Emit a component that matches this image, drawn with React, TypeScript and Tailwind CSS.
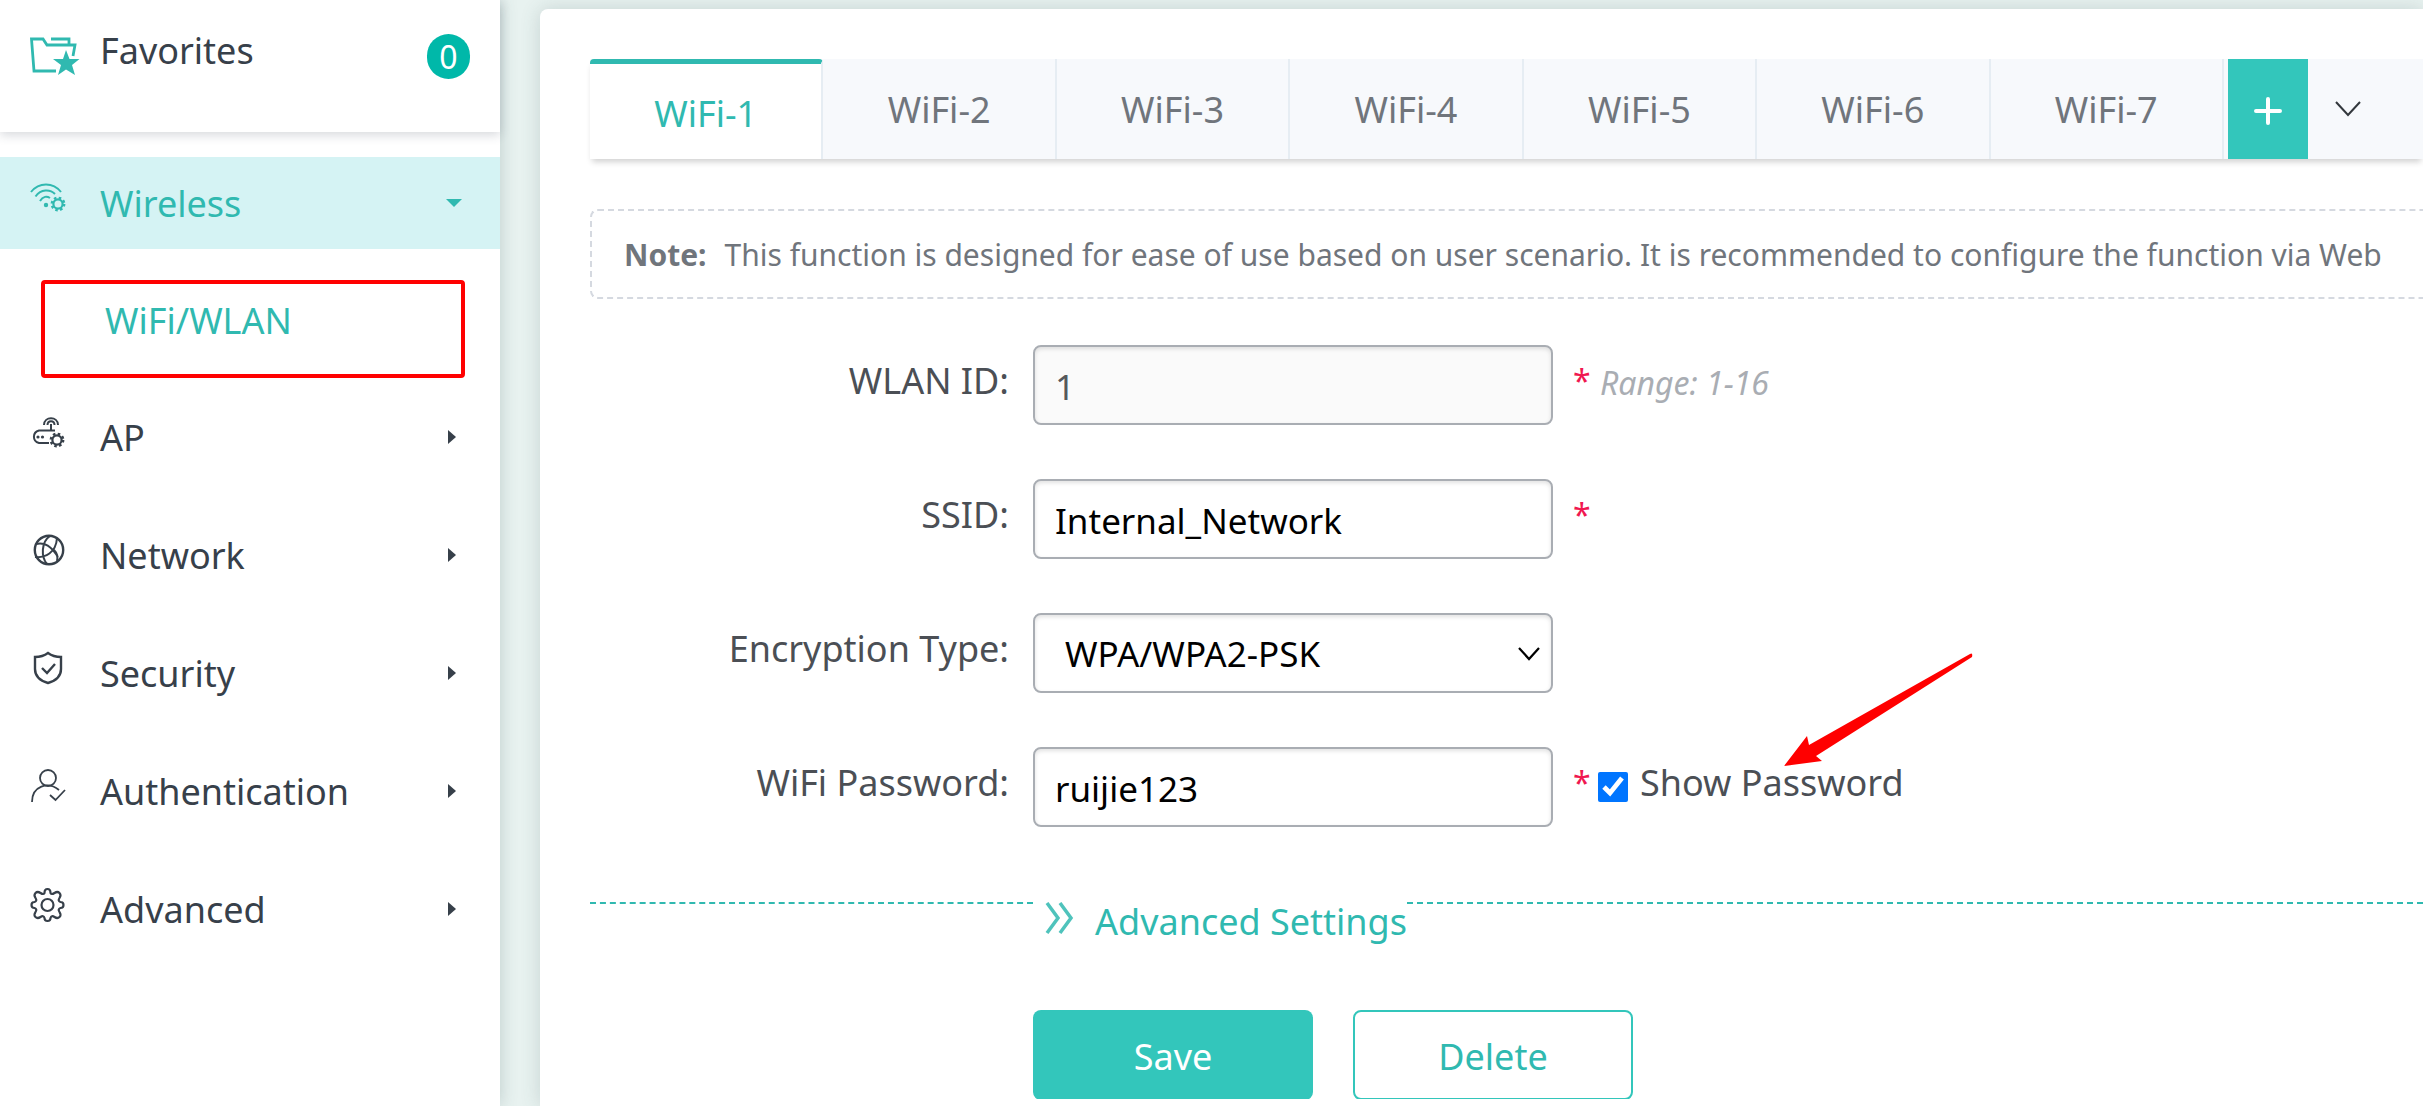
import React, { useState } from 'react';

type IconProps = { weight?: number; children: React.ReactNode };

// Line icon on a 36px canvas, drawn in the current text colour
function LineIcon({ weight = 2.4, children }: IconProps) {
    return (
        <svg width="36" height="36" viewBox="0 0 36 36" fill="none" stroke="currentColor" strokeWidth={weight} aria-hidden="true">
            {children}
        </svg>
    );
}

function SmallGear({ cx, cy }: { cx: number; cy: number }) {
    return (
        <g>
            <circle cx={cx} cy={cy} r="4.6" strokeWidth="2.2" />
            <circle cx={cx} cy={cy} r="6.2" strokeWidth="2.4" strokeDasharray="2.5 2.37" />
        </g>
    );
}

const icons = {
    wireless: (
        <LineIcon weight={2}>
            <path d="M1 11C9 1 23 1 31 11M5.500 15.500C11 8 20 8 25 13M10 20C13 15 17 15 20 17" />
            <circle cx="16" cy="24" r="2.200" fill="currentColor" stroke="none" />
            <SmallGear cx={28} cy={23} />
        </LineIcon>
    ),
    ap: (
        <LineIcon weight={2}>
            <path d="M19 28H9A7 6.500 0 0 1 9 15.500H25M21 16V9M14 10C14 1 28 1 28 10M17.500 10C17.500 5 24.500 5 24.500 10" />
            <circle cx="8" cy="22" r="1.600" fill="currentColor" stroke="none" />
            <circle cx="12.500" cy="22" r="1.600" fill="currentColor" stroke="none" />
            <SmallGear cx={27} cy={25} />
        </LineIcon>
    ),
    network: (
        <LineIcon>
            <circle cx="19" cy="17" r="14.200" />
            <path d="M20 3C11 9 11 24 17 31M6 11C15 9 21 13 28 24M5 24C15 25 26 20 27 5M24 17C27 20 28 24 27 28" strokeWidth="2" />
        </LineIcon>
    ),
    security: (
        <LineIcon>
            <path d="M18 2C14 5 9 6 5 6V18C5 26 11 30 18 32C25 30 31 26 31 18V6C27 6 22 5 18 2Z" />
            <path d="M12 17L17 22L25 13" />
        </LineIcon>
    ),
    authentication: (
        <LineIcon weight={1.8}>
            <circle cx="18" cy="9" r="8" />
            <path d="M2 33C2 17 18 12 29 21M20 26L25.500 31L35 21" />
        </LineIcon>
    ),
    advanced: (
        <LineIcon weight={2.2}>
            <circle cx="17.500" cy="18" r="6" />
            <path
                transform="translate(0.5 1)"
                d="M14 5Q14 1 17 1T20 5Q21 7 24 5Q27 3 29 5T29 10Q27 13 30 14Q33 14 33 17T30 20Q27 21 29 24Q31 27 29 29T24 29Q21 27 20 30Q20 33 17 33T14 30Q13 27 10 29Q7 31 5 29T5 24Q7 21 4 20Q1 20 1 17T4 14Q7 13 5 10Q3 7 5 5T10 5Q13 7 14 5Z"
            />
        </LineIcon>
    ),
};

const menu = [
    { label: 'AP', icon: icons.ap },
    { label: 'Network', icon: icons.network },
    { label: 'Security', icon: icons.security },
    { label: 'Authentication', icon: icons.authentication },
    { label: 'Advanced', icon: icons.advanced },
];

const tabs = ['WiFi-1', 'WiFi-2', 'WiFi-3', 'WiFi-4', 'WiFi-5', 'WiFi-6', 'WiFi-7'];

const fieldClass =
    'h-20 w-[520px] rounded-lg border-2 border-[#a9adb3] bg-white px-5 pt-0.5 text-[35px] text-black shadow-[inset_0_2px_4px_rgba(0,0,0,0.12)] outline-none disabled:bg-[#fafafa] disabled:text-[#55585c]';

function Sidebar() {
    return (
        <aside className="relative z-10 w-[500px] shrink-0 bg-white text-[#37404a] shadow-[0_0_16px_rgba(60,90,90,0.25)]">
            <div className="flex h-[132px] items-start justify-between px-[30px] shadow-[0_3px_10px_rgba(50,60,80,0.2)]">
                <a href="#favorites" className="flex pt-[27px]">
                    <svg width="50" height="42" viewBox="0 0 50 42" className="mt-2.5 mr-5" fill="none" stroke="#30b9b0" strokeWidth="2.800" aria-hidden="true">
                        <path d="M26 34H4L1.500 2H13L17 8H45L43 19M21 2H39V7" />
                        <path d="M36 13L39.500 22H49.500L42 28L45 38L36 32.500L28 38L31 28L23 22H33Z" fill="#30b9b0" stroke="none" />
                    </svg>
                    <span className="leading-[48px]">Favorites</span>
                </a>
                <span className="mt-[34px] flex h-[45px] w-[43px] items-center justify-center rounded-full bg-[#00b8a9] text-[32px] text-white">
                    0
                </span>
            </div>

            <nav className="pt-[25px]">
                <a href="#wireless" className="flex h-[92px] items-center bg-[#d5f3f4] pr-[38px] pl-[30px] text-[#30b9b0]">
                    <span className="mb-2">{icons.wireless}</span>
                    <span className="ml-[34px] flex-1 pt-0.5">Wireless</span>
                    <svg width="16" height="8" viewBox="0 0 16 8" fill="currentColor" aria-hidden="true">
                        <path d="M0 0H16L8 8Z" />
                    </svg>
                </a>
                <div className="pt-[31px] pr-[35px] pl-[41px]">
                    <a href="#wlan" className="block h-[98px] rounded-sm border-4 border-[#ff0000] pt-3 pl-[60px] leading-[50px] text-[#30b9b0]">
                        WiFi/WLAN
                    </a>
                </div>
                {menu.map((item) => (
                    <a key={item.label} href={'#' + item.label.toLowerCase()} className="flex h-[118px] items-center pr-[44px] pl-[30px]">
                        <span className="mb-2">{item.icon}</span>
                        <span className="ml-[34px] flex-1 pt-0.5">{item.label}</span>
                        <svg width="8" height="14" viewBox="0 0 8 14" fill="currentColor" aria-hidden="true">
                            <path d="M0 0L8 7L0 14Z" />
                        </svg>
                    </a>
                ))}
            </nav>
        </aside>
    );
}

type FieldProps = { id: string; label: string; children: React.ReactNode };

function Field({ id, label, children }: FieldProps) {
    return (
        <div className="flex h-20 items-center">
            <label htmlFor={id} className="mr-6 w-[419px] pb-2 text-right">
                {label}
            </label>
            {children}
        </div>
    );
}

function Required() {
    return <span className="ml-5 w-[15px] pb-2 text-[32px] text-[#f01850]">*</span>;
}

export default function App() {
    const [activeTab, setActiveTab] = useState('WiFi-1');
    const [showPassword, setShowPassword] = useState(true);

    return (
        <div className="flex h-screen overflow-hidden bg-[#e8f2f0] font-['Noto_Sans',sans-serif] text-[36px] text-[#4b4f55]">
            <Sidebar />
            <main className="min-w-0 flex-1 pt-[9px] pl-10">
                <div className="h-full rounded-tl-lg bg-white pt-[50px] pl-[50px] shadow-[0_0_20px_rgba(60,90,90,0.2)]">
                    <div className="flex h-[100px] bg-[#f7f9fc] shadow-[0_5px_6px_-2px_rgba(0,0,0,0.18)]">
                        <div className="flex w-[1634px] shrink-0">
                            {tabs.map((tab) => (
                                <button
                                    key={tab}
                                    type="button"
                                    onClick={() => setActiveTab(tab)}
                                    className={
                                        tab === activeTab
                                            ? 'flex-1 rounded-t border-t-5 border-r-2 border-t-[#30b9b0] border-r-[#e6edf3] bg-white pt-1 text-[#30b9b0]'
                                            : 'flex-1 border-r-2 border-[#e6edf3] pt-0.5 text-[#70757c]'
                                    }
                                >
                                    {tab}
                                </button>
                            ))}
                        </div>
                        <button type="button" aria-label="Add WiFi" className="ml-1 flex w-20 shrink-0 items-center justify-center bg-[#33c6bb]">
                            <svg width="28" height="28" viewBox="0 0 28 28" stroke="white" strokeWidth="4" strokeLinecap="round" className="mt-1">
                                <path d="M14 2V26M2 14H26" />
                            </svg>
                        </button>
                        <button type="button" aria-label="More" className="flex w-20 shrink-0 items-center justify-center">
                            <svg width="26" height="16" viewBox="0 0 26 16" fill="none" stroke="#33383d" strokeWidth="2">
                                <path d="M1 1L13 14L25 1" />
                            </svg>
                        </button>
                    </div>

                    <p className="mt-[50px] flex h-[90px] items-center gap-[18px] rounded-l-lg border-2 border-r-0 border-dashed border-[#d5d9e0] pl-8 text-[30px] whitespace-nowrap text-[#70757c]">
                        <b>Note:</b>
                        <span>This function is designed for ease of use based on user scenario. It is recommended to configure the function via Web</span>
                    </p>

                    <form className="mt-[46px]" onSubmit={(e) => e.preventDefault()}>
                        <div className="flex flex-col gap-[54px]">
                            <Field id="wlan-id" label="WLAN ID:">
                                <input id="wlan-id" className={fieldClass} defaultValue="1" disabled />
                                <Required />
                                <span className="ml-3 pb-1 text-[32px] text-[#a9adb3] italic">Range: 1-16</span>
                            </Field>
                            <Field id="ssid" label="SSID:">
                                <input id="ssid" className={fieldClass} defaultValue="Internal_Network" />
                                <Required />
                            </Field>
                            <Field id="encryption" label="Encryption Type:">
                                <div className="relative">
                                    <select id="encryption" className={fieldClass + ' appearance-none pl-[30px]'} defaultValue="WPA/WPA2-PSK">
                                        <option>WPA/WPA2-PSK</option>
                                        <option>WPA2-PSK</option>
                                        <option>Open</option>
                                    </select>
                                    <svg width="24" height="14" viewBox="0 0 24 14" fill="none" stroke="black" strokeWidth="2.200" className="pointer-events-none absolute top-[34px] right-3" aria-hidden="true">
                                        <path d="M2 1L12 12L22 1" />
                                    </svg>
                                </div>
                            </Field>
                            <Field id="password" label="WiFi Password:">
                                <input id="password" type={showPassword ? 'text' : 'password'} className={fieldClass} defaultValue="ruijie123" />
                                <Required />
                                <div className="relative ml-[10px] flex items-center">
                                    <input
                                        id="show-password"
                                        type="checkbox"
                                        className="size-[30px] accent-[#0075ff]"
                                        checked={showPassword}
                                        onChange={(e) => setShowPassword(e.target.checked)}
                                    />
                                    <label htmlFor="show-password" className="ml-3 pb-2">
                                        Show Password
                                    </label>
                                    <svg width="190" height="116" viewBox="0 0 190 116" fill="#ff0000" className="pointer-events-none absolute bottom-[50px] left-[186px]" aria-hidden="true">
                                        <path d="M0 114L23 84L25 93L186 2Q189 0 188 5L32 104L38 109Z" />
                                    </svg>
                                </div>
                            </Field>
                        </div>

                        <div className="mt-[75px] flex items-start">
                            <div className="w-[443px] border-t-2 border-dashed border-[#30b9b0]" />
                            <button type="button" className="flex items-start text-[#30b9b0]">
                                <svg width="30" height="34" viewBox="0 0 30 34" fill="none" stroke="currentColor" strokeWidth="3.500" strokeOpacity="0.85" className="mr-5 ml-3" aria-hidden="true">
                                    <path d="M2 1L13 16L2 31M15 1L26 16L15 31" />
                                </svg>
                                <span className="leading-10">Advanced Settings</span>
                            </button>
                            <div className="flex-1 border-t-2 border-dashed border-[#30b9b0]" />
                        </div>

                        <div className="mt-[68px] ml-[443px] flex h-[89px] gap-10 overflow-hidden">
                            <button type="submit" className="h-[90px] w-[280px] rounded-lg bg-[#33c6bb] pt-1 text-white">
                                Save
                            </button>
                            <button type="button" className="h-[90px] w-[280px] rounded-lg border-2 border-[#33c6bb] bg-white pt-1 text-[#30b9b0]">
                                Delete
                            </button>
                        </div>
                    </form>
                </div>
            </main>
        </div>
    );
}
